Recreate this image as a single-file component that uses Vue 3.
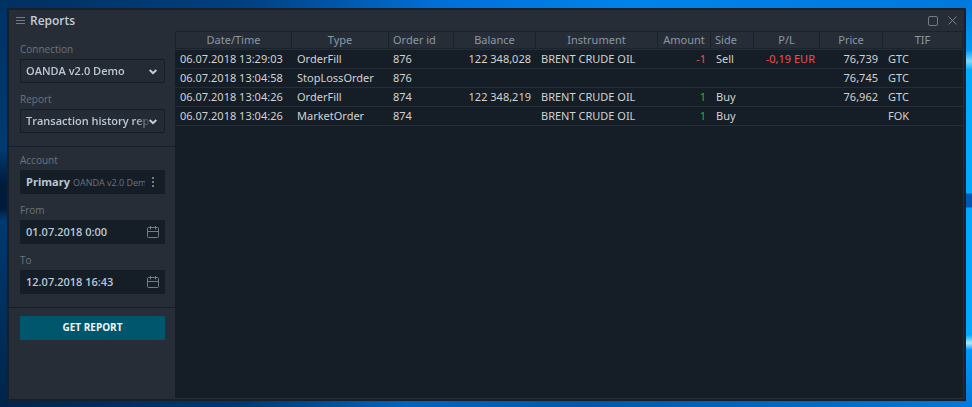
<script setup>
import { ref } from 'vue'

const connection = ref('OANDA v2.0 Demo')
const report = ref('Transaction history report')
const from = ref('01.07.2018 0:00')
const to = ref('12.07.2018 16:43')

const columns = [
  { key: 'time', title: 'Date/Time' },
  { key: 'type', title: 'Type' },
  { key: 'order', title: 'Order id' },
  { key: 'balance', title: 'Balance' },
  { key: 'instrument', title: 'Instrument' },
  { key: 'amount', title: 'Amount' },
  { key: 'side', title: 'Side' },
  { key: 'pl', title: 'P/L' },
  { key: 'price', title: 'Price' },
  { key: 'tif', title: 'TIF' },
]

const rows = [
  { time: '06.07.2018 13:29:03', type: 'OrderFill', order: '876', balance: '122 348,028', instrument: 'BRENT CRUDE OIL', amount: '-1', side: 'Sell', pl: '-0,19 EUR', price: '76,739', tif: 'GTC' },
  { time: '06.07.2018 13:04:58', type: 'StopLossOrder', order: '876', price: '76,745', tif: 'GTC' },
  { time: '06.07.2018 13:04:26', type: 'OrderFill', order: '874', balance: '122 348,219', instrument: 'BRENT CRUDE OIL', amount: '1', side: 'Buy', price: '76,962', tif: 'GTC' },
  { time: '06.07.2018 13:04:26', type: 'MarketOrder', order: '874', instrument: 'BRENT CRUDE OIL', amount: '1', side: 'Buy', tif: 'FOK' },
]

function tone(key, value) {
  if (!value || (key !== 'amount' && key !== 'pl')) return ''
  return value.startsWith('-') ? 'loss' : 'gain'
}
</script>

<template>
  <div class="desktop">
    <main class="window">
      <header class="titlebar">
        <button class="icon-button" aria-label="Menu">
          <svg width="9" height="7" viewBox="0 0 9 7"><path d="M0 .5h9M0 3.5h9M0 6.5h9" stroke="#737b84" /></svg>
        </button>
        <h1>Reports</h1>
        <button class="icon-button maximize" aria-label="Maximize">
          <svg width="10" height="10" viewBox="0 0 10 10"><rect x=".5" y=".5" width="9" height="9" rx="1.5" fill="none" stroke="#737b83" /></svg>
        </button>
        <button class="icon-button" aria-label="Close">
          <svg width="9" height="9" viewBox="0 0 9 9"><path d="M.5.5l8 8M8.5.5l-8 8" stroke="#7b838b" /></svg>
        </button>
      </header>

      <div class="content">
        <form class="sidebar" @submit.prevent>
          <section class="group">
            <div class="field">
              <label for="connection">Connection</label>
              <div class="box outlined">
                <select id="connection" v-model="connection">
                  <option>OANDA v2.0 Demo</option>
                </select>
                <svg class="chevron" width="8" height="6" viewBox="0 0 8 6"><path d="M.7 1L4 4.200 7.300 1" fill="none" stroke="#c8ced6" stroke-width="2" /></svg>
              </div>
            </div>
            <div class="field">
              <label for="report">Report</label>
              <div class="box outlined">
                <select id="report" v-model="report">
                  <option>Transaction history report</option>
                </select>
                <svg class="chevron" width="8" height="6" viewBox="0 0 8 6"><path d="M.7 1L4 4.200 7.300 1" fill="none" stroke="#c8ced6" stroke-width="2" /></svg>
              </div>
            </div>
          </section>

          <section class="group">
            <div class="field">
              <label for="account">Account</label>
              <button id="account" type="button" class="box account">
                <strong>Primary</strong>
                <span>OANDA v2.0 Demo</span>
                <svg width="2" height="10" viewBox="0 0 2 10"><path d="M0 0h2v2H0zM0 4h2v2H0zM0 8h2v2H0z" fill="#737b84" /></svg>
              </button>
            </div>
            <div class="field">
              <label for="from">From</label>
              <div class="box">
                <input id="from" v-model="from" type="text">
                <button type="button" class="icon-button calendar" aria-label="Pick start date">
                  <svg width="12" height="12" viewBox="0 0 12 12" fill="none" stroke="#747b83"><rect x=".5" y="1.5" width="11" height="10" rx="1" /><path d="M1 5.5h10" /><path d="M3.500 0v3.500M8.500 0v3.500" /></svg>
                </button>
              </div>
            </div>
            <div class="field">
              <label for="to">To</label>
              <div class="box">
                <input id="to" v-model="to" type="text">
                <button type="button" class="icon-button calendar" aria-label="Pick end date">
                  <svg width="12" height="12" viewBox="0 0 12 12" fill="none" stroke="#747b83"><rect x=".5" y="1.5" width="11" height="10" rx="1" /><path d="M1 5.5h10" /><path d="M3.500 0v3.500M8.500 0v3.500" /></svg>
                </button>
              </div>
            </div>
          </section>

          <section class="group actions">
            <button type="submit" class="submit">GET REPORT</button>
          </section>
        </form>

        <div class="results">
          <table>
            <colgroup>
              <col v-for="c in columns" :key="c.key" :class="'col-' + c.key">
            </colgroup>
            <thead>
              <tr>
                <th v-for="c in columns" :key="c.key" :class="'head-' + c.key" scope="col">{{ c.title }}</th>
              </tr>
            </thead>
            <tbody>
              <tr v-for="(row, i) in rows" :key="i">
                <td v-for="c in columns" :key="c.key" :class="['cell-' + c.key, tone(c.key, row[c.key])]">{{ row[c.key] }}</td>
              </tr>
            </tbody>
          </table>
        </div>
      </div>
    </main>
  </div>
</template>

<style>
body {
  margin: 0;
}
</style>

<style scoped>
.desktop {
  box-sizing: border-box;
  min-height: 100vh;
  display: flex;
  padding: 8px 6px 6px 7px;
  font-family: "Open Sans", "Noto Sans", sans-serif;
  font-size: 11px;
  background:
    linear-gradient(#00a0ff00 0 193px, #0058b0 194px 207px, #00a0ff00 208px) right / 6px 100% no-repeat,
    linear-gradient(#0078dc, #009cf4 50px, #80d8ff 61px, #00acff 70px, #00aaff 335px, #a8ecff 343px, #0099ff 350px, #0078dc) right / 6px 100% no-repeat,
    linear-gradient(#003264, #003a70 150px, #001a3c 184px 208px, #003a70 220px, #002448) left / 7px 100% no-repeat,
    linear-gradient(90deg, #003060, #004080 25%, #0070d8 45%, #0084ea 65%, #0078dc) top / 100% 8px no-repeat,
    linear-gradient(90deg, #00244c, #003870 25%, #0064c0 42%, #0058a8 60%, #0078dc);
}

.window {
  flex: 1;
  min-width: 0;
  display: flex;
  flex-direction: column;
  border: 2px solid #17202a;
  background: #262d36;
}

button,
input,
select {
  font: inherit;
  color: inherit;
  border: 0;
  margin: 0;
  padding: 0;
  background: none;
}

svg {
  display: block;
  flex: none;
}

.titlebar {
  display: flex;
  align-items: center;
  height: 21px;
  padding: 0 7px;
}

h1 {
  flex: 1;
  margin: 0 0 0 5px;
  font-size: 12px;
  line-height: 20px;
  font-weight: 600;
  color: #c3ccd8;
}

.maximize {
  margin-right: 10px;
}

.content {
  flex: 1;
  display: grid;
  grid-template-columns: 166px minmax(0, 1fr);
}

.group {
  padding: 3px 10px 13px 11px;
  border-bottom: 1px solid #17202a;
}

.group:first-child {
  padding-top: 8px;
}

.actions {
  padding-top: 8px;
  border-bottom: 0;
}

.field + .field {
  margin-top: 6px;
}

label {
  display: block;
  font-size: 10px;
  line-height: 20px;
  color: #6c747d;
}

.box {
  position: relative;
  box-sizing: border-box;
  width: 100%;
  height: 24px;
  display: flex;
  align-items: center;
  padding: 0 6px;
  border-radius: 1px;
  background: #151e27;
  color: #bcc7d5;
  font-weight: 600;
}

.outlined {
  border: 1px solid #151e27;
  background: #242b34;
  padding: 0 5px;
}

select {
  box-sizing: border-box;
  flex: 1;
  min-width: 0;
  appearance: none;
  height: 22px;
  padding-bottom: 2px;
  overflow: hidden;
  text-overflow: clip;
  outline: 0;
  mask-image: linear-gradient(90deg, #000 110px, transparent 125px);
}

.chevron {
  position: absolute;
  right: 7px;
  top: 9px;
  pointer-events: none;
}

input {
  flex: 1;
  min-width: 0;
  padding-bottom: 2px;
  outline: 0;
}

.account {
  gap: 3px;
  padding-right: 11px;
  text-align: left;
}

.account strong {
  font-weight: 700;
  padding-bottom: 2px;
}

.account span {
  flex: 1;
  overflow: hidden;
  white-space: nowrap;
  font-size: 9px;
  font-weight: 400;
  color: #6c747d;
  margin-right: 4px;
}

.submit {
  width: 100%;
  height: 24px;
  padding-bottom: 2px;
  border-radius: 1px;
  background: #00566c;
  color: #f0f5f7;
  font-size: 10px;
  font-weight: 700;
}

.results {
  background: #151e27;
  border: solid #262d36;
  border-width: 0 1px 1px 0;
}

table {
  width: 100%;
  table-layout: fixed;
  border-collapse: separate;
  border-spacing: 0;
  font-family: "Noto Sans", sans-serif;
  font-size: 11px;
  line-height: 16px;
}

.col-time { width: 117px; }
.col-type { width: 97px; }
.col-order { width: 65px; }
.col-balance { width: 82px; }
.col-instrument { width: 122px; }
.col-amount { width: 53px; }
.col-side { width: 43px; }
.col-pl { width: 66px; }
.col-price { width: 63px; }

th {
  height: 16px;
  padding: 0;
  border: solid #1a222b;
  border-width: 1px 1px 1px 0;
  background: #262d36;
  color: #8b98a6;
  font-weight: 400;
}

th:first-child {
  border-left-width: 1px;
}

.head-order,
.head-side {
  padding-left: 4px;
  text-align: left;
}

td {
  height: 18px;
  padding: 0 5px;
  border-bottom: 1px solid #262d36;
  color: #d2d2d2;
  white-space: nowrap;
}

.cell-order {
  padding-left: 4px;
}

tbody tr:first-child td {
  border-top: 1px solid #262d36;
}

.cell-balance,
.cell-amount,
.cell-pl,
.cell-price {
  text-align: right;
}

.loss {
  color: #f24e50;
}

.gain {
  color: #27b237;
}
</style>
